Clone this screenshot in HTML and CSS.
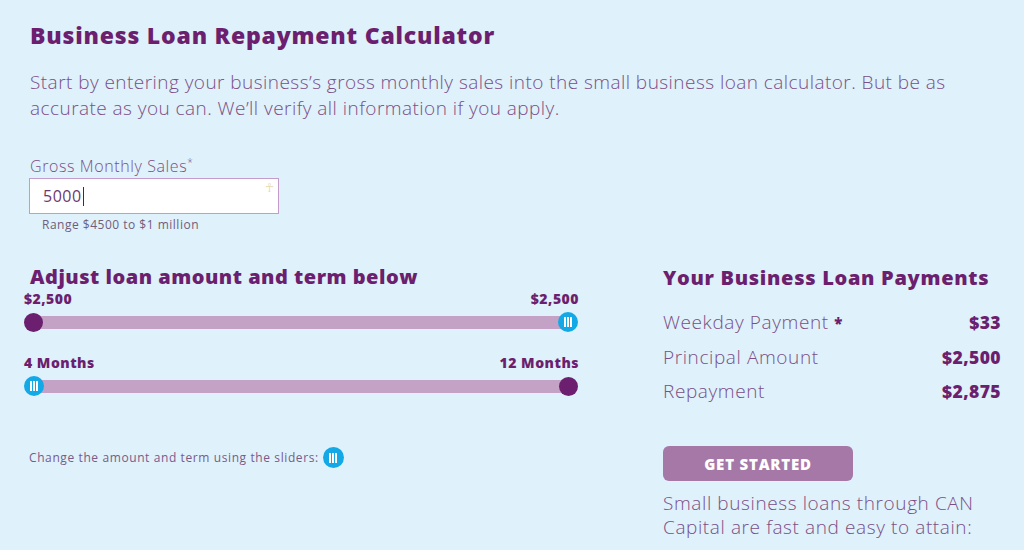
FILE: index.html
```html
<!DOCTYPE html>
<html>
	<head>
		<link rel="stylesheet" href="styles.css">
	</head>
	<body>
		<div class="calc">
			<h1 class="title">Business Loan Repayment Calculator</h1>
			<p class="intro">Start by entering your business’s gross monthly sales into the small business loan calculator. But be as accurate as you can. We’ll verify all information if you apply.</p>

			<div class="field">
				<label class="field-label">Gross Monthly Sales<sup>*</sup></label>
				<div class="input-box">
					<span class="input-value">5000</span><span class="caret"></span>
					<span class="input-icon">&#9765;</span>
				</div>
				<div class="hint">Range $4500 to $1 million</div>
			</div>

			<div class="cols">
				<div class="left">
					<h2 class="sub">Adjust loan amount and term below</h2>
					<div class="slider">
						<div class="slider-labels"><span>$2,500</span><span>$2,500</span></div>
						<div class="track">
							<span class="knob dot"></span>
							<span class="knob grip"><i></i><i></i><i></i></span>
						</div>
					</div>
					<div class="slider">
						<div class="slider-labels"><span>4 Months</span><span>12 Months</span></div>
						<div class="track">
							<span class="knob grip"><i></i><i></i><i></i></span>
							<span class="knob dot"></span>
						</div>
					</div>
					<p class="note">Change the amount and term using the sliders: <span class="knob grip small"><i></i><i></i><i></i></span></p>
				</div>
				<div class="right">
					<h2 class="sub">Your Business Loan Payments</h2>
					<div class="row"><span>Weekday Payment <b class="star">*</b></span><b>$33</b></div>
					<div class="row"><span>Principal Amount</span><b>$2,500</b></div>
					<div class="row"><span>Repayment</span><b>$2,875</b></div>
					<button class="btn">GET STARTED</button>
					<p class="outro">Small business loans through CAN Capital are fast and easy to attain:</p>
				</div>
			</div>
		</div>
	</body>
</html>
```

FILE: styles.css
```css
*{
	margin: 0;
	padding: 0;
	box-sizing: border-box;
}
body{
	background-color: #dff1fb;
	font-family: "Open Sans", "Liberation Sans", sans-serif;
	color: #7a4f85;
	overflow: hidden;
}
.calc{
	padding: 19px 0 0 30px;
	width: 1010px;
}
.title{
	font-size: 23px;
	font-weight: 800;
	color: #6b1f6e;
	line-height: 32px;
	letter-spacing: 0.8px;
}
.intro{
	margin-top: 18px;
	font-size: 19px;
	font-weight: 300;
	line-height: 26px;
	letter-spacing: 0.45px;
	width: 960px;
}
.field{
	margin-top: 31px;
}
.field-label{
	display: block;
	font-size: 16px;
	font-weight: 300;
	line-height: 20px;
	letter-spacing: 0.6px;
}
.field-label sup{
	font-size: 10px;
}
.input-box{
	display: flex;
	align-items: center;
	position: relative;
	margin-top: 2px;
	margin-left: -1px;
	width: 250px;
	height: 36px;
	background: #fff;
	border: 1px solid #c49ccb;
	padding-left: 13px;
	font-size: 16px;
	letter-spacing: 0.5px;
	color: #6b3a70;
}
.caret{
	width: 1px;
	height: 19px;
	background: #333;
	margin-left: 1px;
}
.input-icon{
	position: absolute;
	right: 4px;
	top: 0;
	font-size: 12px;
	color: #e6dbb0;
}
.hint{
	margin: 3px 0 0 12px;
	font-size: 12px;
	line-height: 16px;
	letter-spacing: 0.5px;
	color: #6f5d7a;
}
.cols{
	display: flex;
	margin-top: 32px;
}
.left{
	width: 555px;
	margin-left: -6px;
}
.right{
	margin-left: 84px;
	width: 338px;
}
.sub{
	font-size: 20px;
	font-weight: 800;
	color: #6b1f6e;
	line-height: 24px;
	letter-spacing: 0.5px;
}
.left .sub{
	padding-left: 6px;
}
.right .sub{
	letter-spacing: 0.7px;
}
.slider{
	margin-top: 1px;
}
.slider + .slider{
	margin-top: 22px;
}
.slider-labels{
	display: flex;
	justify-content: space-between;
	font-size: 14px;
	font-weight: 800;
	color: #6b1f6e;
	line-height: 18px;
	letter-spacing: 0.5px;
}
.track{
	display: flex;
	justify-content: space-between;
	align-items: center;
	margin-top: 4px;
	margin-right: 1px;
	height: 20px;
	background: linear-gradient(#c4a2c6, #c4a2c6) center / calc(100% - 20px) 13px no-repeat;
}
.knob{
	width: 20px;
	height: 20px;
	border-radius: 50%;
	display: inline-flex;
	justify-content: center;
	align-items: center;
	gap: 1px;
}
.dot{
	background: #6b1f6e;
	width: 19px;
	height: 19px;
	margin: 0 0 0 1px;
}
.track .dot:first-child{
	margin: 0 1px 0 0;
}
.grip{
	background: #12a9e6;
}
.grip i{
	display: block;
	width: 2px;
	height: 10px;
	background: #fff;
}
.note{
	margin-top: 51px;
	padding-left: 5px;
	font-size: 12px;
	letter-spacing: 0.6px;
	color: #7a5a8a;
	display: flex;
	align-items: center;
	gap: 4px;
}
.knob.small{
	width: 21px;
	height: 21px;
}
.right .sub{
	margin-top: 1px;
	margin-bottom: 15px;
}
.row{
	display: flex;
	justify-content: space-between;
	align-items: baseline;
	font-size: 19px;
	font-weight: 300;
	line-height: 34px;
	letter-spacing: 0.6px;
}
.row b{
	font-weight: 800;
	color: #6b1f6e;
	font-size: 17.5px;
	letter-spacing: 0.4px;
}
.row b.star{
	font-size: 15px;
}
.btn{
	display: block;
	margin-top: 38px;
	width: 190px;
	height: 35px;
	border: none;
	border-radius: 6px;
	background: #a678a8;
	color: #fff;
	font-family: "Open Sans", sans-serif;
	font-weight: 800;
	font-size: 15px;
	letter-spacing: 0.8px;
}
.outro{
	margin-top: 10px;
	font-size: 19px;
	font-weight: 300;
	line-height: 24px;
	letter-spacing: 0.6px;
	width: 338px;
}
```
